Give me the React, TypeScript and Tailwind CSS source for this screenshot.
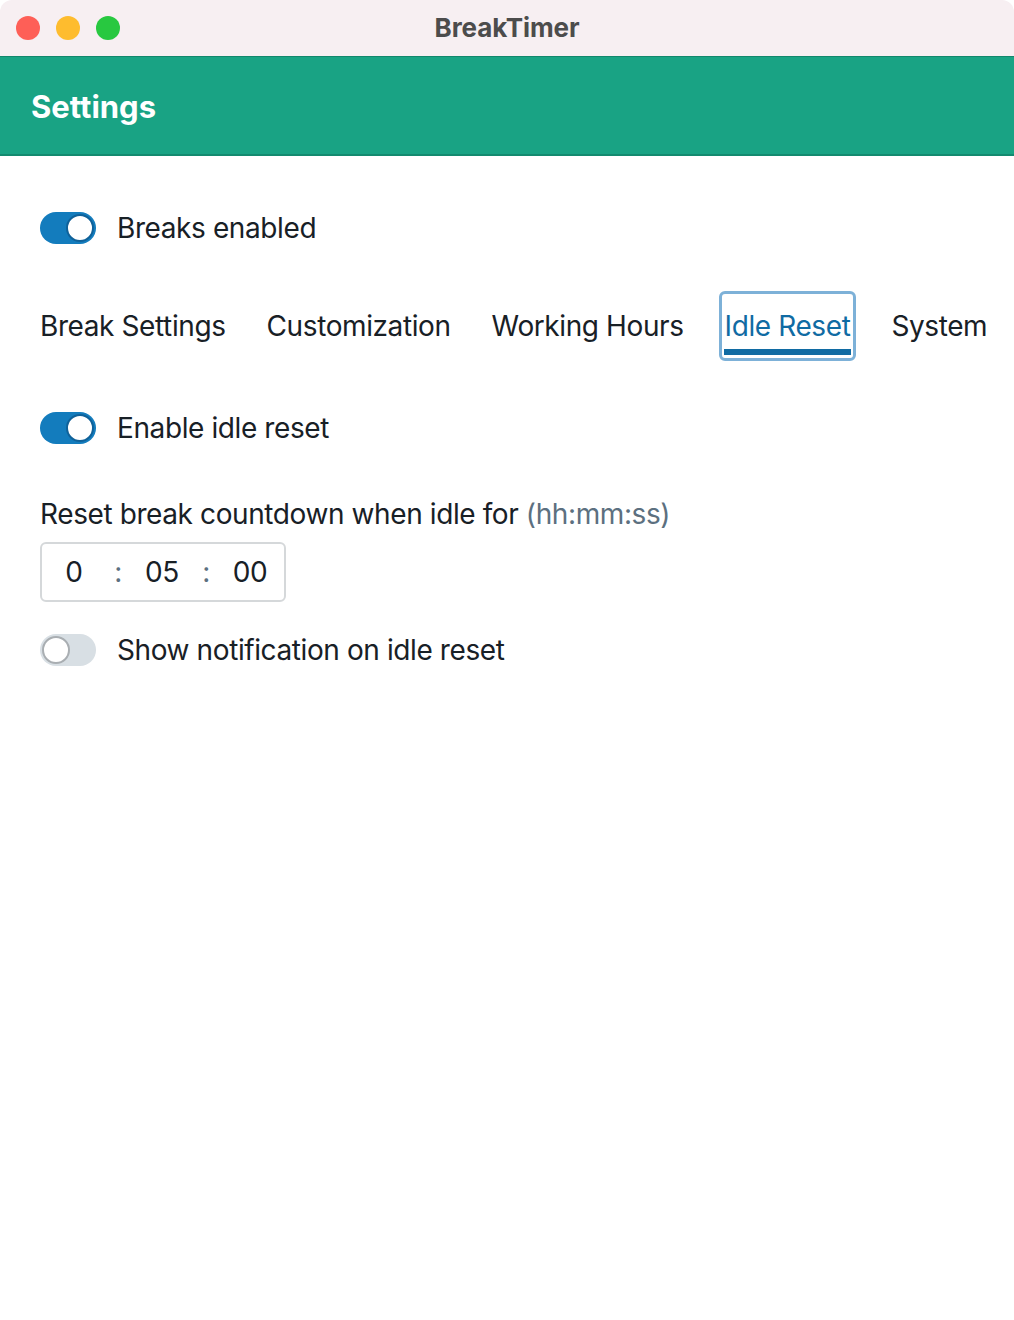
import React from "react";

function Toggle({ on }: { on: boolean }) {
  return (
    <div
      className={
        "relative h-[32px] w-[56px] shrink-0 rounded-full " +
        (on ? "bg-[#137cbd]" : "bg-[#d8dfe4]")
      }
    >
      <div
        className={
          "absolute top-[2px] h-[28px] w-[28px] rounded-full bg-white " +
          (on
            ? "right-[2px] border-[2px] border-[#0f6199]"
            : "left-[2px] border-[2px] border-[#a9aeb2]")
        }
      />
    </div>
  );
}

export default function App() {
  const tabs = ["Break Settings", "Customization", "Working Hours", "Idle Reset", "System"];
  return (
    <div
      className="flex h-[1320px] w-[1014px] flex-col overflow-hidden rounded-[12px] bg-white text-[#182026]"
      style={{ fontFamily: "Inter, 'Noto Sans', sans-serif" }}
    >
      <div className="relative flex h-[56px] shrink-0 items-center bg-[#f7eff2]">
        <div className="ml-[16px] flex gap-[16px]">
          <div className="h-[24px] w-[24px] rounded-full bg-[#fe5f57]" />
          <div className="h-[24px] w-[24px] rounded-full bg-[#febc2e]" />
          <div className="h-[24px] w-[24px] rounded-full bg-[#28c840]" />
        </div>
        <div className="absolute inset-x-0 top-0 flex h-[54px] items-center justify-center text-[26px] font-bold tracking-[-0.1px] text-[#4c4c4c]">
          BreakTimer
        </div>
      </div>
      <div className="flex h-[100px] shrink-0 items-center border-t border-b-2 border-t-[#12876c] border-b-[#138a6f] bg-[#19a384] pl-[31px] pt-[3px] text-[31px] font-bold text-white">
        Settings
      </div>
      <div className="flex flex-col whitespace-nowrap pl-[40px] pt-[52px] text-[28px] leading-none tracking-[-0.4px]">
        <div className="flex h-[40px] items-center gap-[21px]">
          <Toggle on />
          <span>Breaks enabled</span>
        </div>
        <div className="mt-[43px] flex gap-[41px]">
          {tabs.map((t) => {
            const sel = t === "Idle Reset";
            return (
              <div
                key={t}
                className={
                  "relative flex h-[70px] items-center " +
                  (sel ? "text-[#106ba3]" : "")
                }
              >
                {sel && (
                  <>
                    <div className="absolute -left-[6px] -right-[6px] top-0 bottom-0 rounded-[6px] border-[3px] border-[#7db1d8]" />
                    <div className="absolute -left-[1px] -right-[1px] top-[58px] h-[6px] bg-[#106ba3]" />
                  </>
                )}
                <span className="relative">{t}</span>
              </div>
            );
          })}
        </div>
        <div className="mt-[47px] flex h-[40px] items-center gap-[21px]">
          <Toggle on />
          <span>Enable idle reset</span>
        </div>
        <div className="mt-[48px] flex h-[36px] items-center">
          Reset break countdown when idle for&nbsp;<span className="text-[#5c7080]">(hh:mm:ss)</span>
        </div>
        <div className="mt-[10px] flex h-[60px] w-[246px] items-center rounded-[6px] border-2 border-[#d5d8da] pl-[10px]">
          <span className="w-[44px] text-center">0</span>
          <span className="w-[44px] text-center text-[#5c7080]">:</span>
          <span className="w-[44px] text-center">05</span>
          <span className="w-[44px] text-center text-[#5c7080]">:</span>
          <span className="w-[44px] text-center">00</span>
        </div>
        <div className="mt-[28px] flex h-[40px] items-center gap-[21px]">
          <Toggle on={false} />
          <span>Show notification on idle reset</span>
        </div>
      </div>
    </div>
  );
}
